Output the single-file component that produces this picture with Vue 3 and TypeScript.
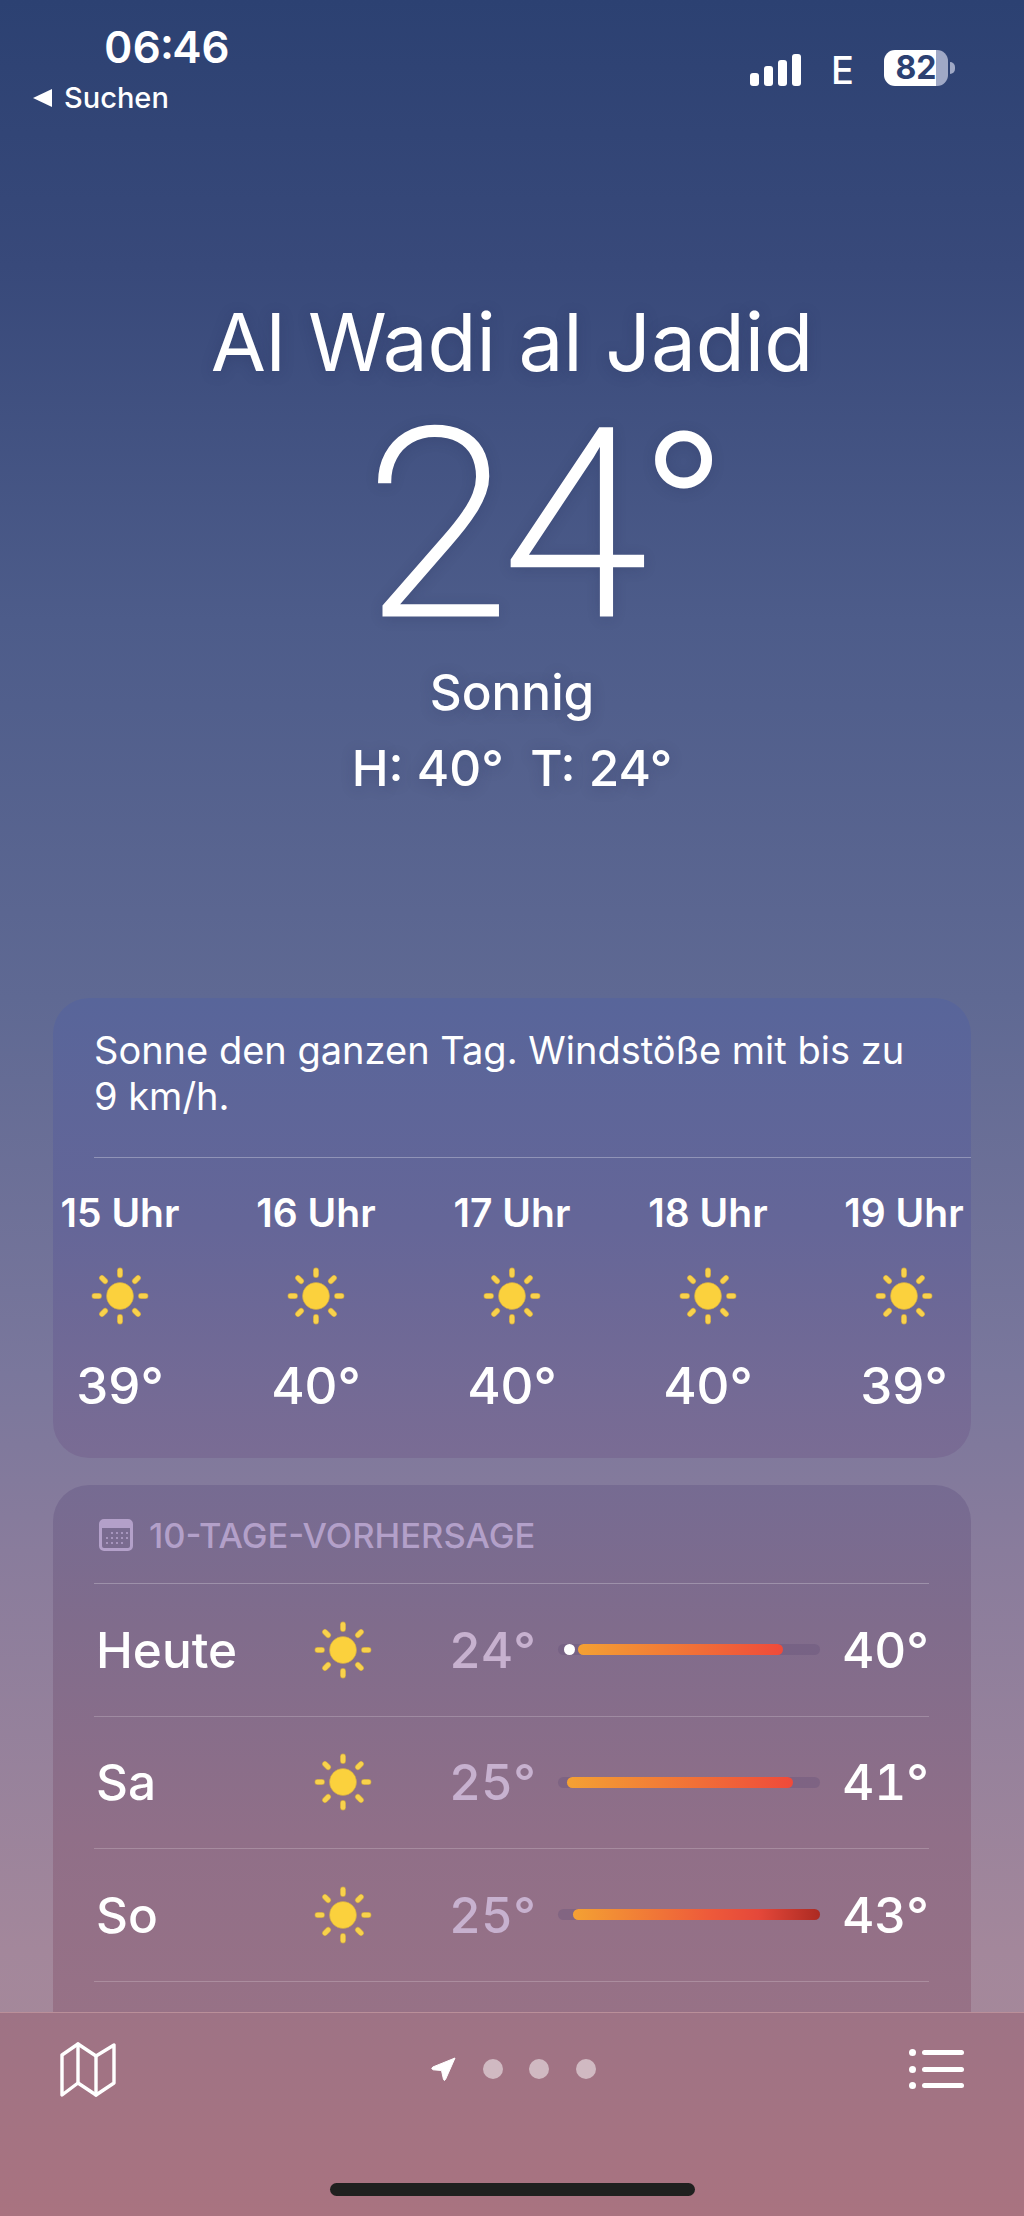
<template>
  <div class="page">
    <header class="status">
      <div class="status-left">
        <div class="time">06:46</div>
        <div class="back"><span class="back-arrow"></span>Suchen</div>
      </div>
      <div class="status-right">
        <div class="signal">
          <span v-for="h in [13, 20, 26, 32]" :key="h" class="signal-bar" :style="{ height: h + 'px' }"></span>
        </div>
        <span class="net">E</span>
        <div class="battery"><span class="battery-num">82</span></div>
        <span class="battery-nub"></span>
      </div>
    </header>

    <main class="scroll">
      <section class="hero">
        <h1 class="city">Al Wadi al Jadid</h1>
        <div class="temp">24<span class="temp-deg">°</span></div>
        <div class="cond">Sonnig</div>
        <div class="hilo">H: 40°&nbsp; T: 24°</div>
      </section>

      <section class="card hourly">
        <p class="summary">Sonne den ganzen Tag. Windstöße mit bis zu 9&nbsp;km/h.</p>
        <div class="hours">
          <div v-for="h in hours" :key="h.label" class="hour">
            <div class="hour-label">{{ h.label }}</div>
            <svg class="sun" viewBox="-30 -30 60 60">
              <circle r="13.5" fill="#fbd13d" stroke="#c9a24a" stroke-width="0.6" />
              <g stroke="#c9a24a" stroke-width="5.8" stroke-linecap="round">
                <line v-for="a in rays" :key="a" y1="-21" y2="-25.5" :transform="`rotate(${a})`" />
              </g>
              <g stroke="#f8d24c" stroke-width="4.6" stroke-linecap="round">
                <line v-for="a in rays" :key="a" y1="-21" y2="-25.5" :transform="`rotate(${a})`" />
              </g>
            </svg>
            <div class="hour-temp">{{ h.temp }}°</div>
          </div>
        </div>
      </section>

      <section class="card forecast">
        <div class="forecast-head">
          <svg class="cal" viewBox="0 0 34 32">
            <path fill="#b3a0c9" fill-rule="evenodd" d="M5 0h24a5 5 0 0 1 5 5v22a5 5 0 0 1-5 5H5a5 5 0 0 1-5-5V5a5 5 0 0 1 5-5zM3 9v18a2 2 0 0 0 2 2h24a2 2 0 0 0 2-2V9z" />
            <g fill="#b3a0c9">
              <circle v-for="d in calDots" :key="d[0] + '-' + d[1]" :cx="d[0]" :cy="d[1]" r="1.1" />
            </g>
          </svg>
          <span>10-TAGE-VORHERSAGE</span>
        </div>
        <div v-for="d in days" :key="d.name" class="day">
          <span class="day-name">{{ d.name }}</span>
          <svg class="sun day-sun" viewBox="-30 -30 60 60">
            <circle r="13.5" fill="#fbd13d" stroke="#c9a24a" stroke-width="0.6" />
            <g stroke="#c9a24a" stroke-width="5.8" stroke-linecap="round">
              <line v-for="a in rays" :key="a" y1="-21" y2="-25.5" :transform="`rotate(${a})`" />
            </g>
            <g stroke="#f8d24c" stroke-width="4.6" stroke-linecap="round">
              <line v-for="a in rays" :key="a" y1="-21" y2="-25.5" :transform="`rotate(${a})`" />
            </g>
          </svg>
          <span class="day-low">{{ d.low }}°</span>
          <div class="range">
            <div class="range-fill" :style="{ marginLeft: d.from + 'px', width: d.width + 'px', background: d.fill }"></div>
            <span v-if="d.now" class="range-now"></span>
          </div>
          <span class="day-high">{{ d.high }}°</span>
        </div>
      </section>
    </main>

    <footer class="tabbar">
      <svg class="map" viewBox="0 0 56 55" fill="none" stroke="#fff" stroke-width="3.4" stroke-linejoin="round" stroke-linecap="round">
        <path d="M2 13 L18 2 L36 14 L54 3 V41 L36 53 L18 41 L2 53 Z" />
        <path d="M18 2 V41 M36 14 V53" />
      </svg>
      <div class="pager">
        <svg class="arrow" viewBox="0 0 25 24"><path fill="#fff" stroke="#fff" stroke-width="1" stroke-linejoin="round" d="M24 1 L14.500 22.500 Q13.200 24.400 12.500 22.500 L10.500 13.500 L2 12.800 Q-0.300 11.500 1.800 10 Z" /></svg>
        <span class="dot"></span><span class="dot"></span><span class="dot"></span>
      </div>
      <div class="list">
        <div v-for="n in 3" :key="n" class="list-row"><span class="list-dot"></span><span class="list-line"></span></div>
      </div>
      <span class="home"></span>
    </footer>
  </div>
</template>

<script setup lang="ts">
const rays = [0, 45, 90, 135, 180, 225, 270, 315]

const hours = [
  { label: '15 Uhr', temp: 39 },
  { label: '16 Uhr', temp: 40 },
  { label: '17 Uhr', temp: 40 },
  { label: '18 Uhr', temp: 40 },
  { label: '19 Uhr', temp: 39 }
]

const warm = 'linear-gradient(90deg, #f4a133, #ef4a3a)'
const hot = 'linear-gradient(90deg, #f4a133 0%, #ee5a3a 55%, #e5483a 75%, #ac2a22 100%)'

const days = [
  { name: 'Heute', low: 24, high: 40, from: 20, width: 205, fill: warm, now: true },
  { name: 'Sa', low: 25, high: 41, from: 9, width: 226, fill: warm, now: false },
  { name: 'So', low: 25, high: 43, from: 15, width: 247, fill: hot, now: false }
]

const calDots: number[][] = []
for (const y of [14, 19, 24]) {
  for (const x of [8, 13, 18, 23, 28]) {
    if (!(y === 14 && x === 8) && !(y === 24 && x === 28)) calDots.push([x, y])
  }
}
</script>

<style>
html,
body {
  margin: 0;
  padding: 0;
}
</style>

<style scoped>
.page {
  position: relative;
  width: 1024px;
  height: 2216px;
  overflow: hidden;
  display: flex;
  flex-direction: column;
  font-family: Inter, "Noto Sans", sans-serif;
  color: #fff;
  background: linear-gradient(180deg, #2c4172 0%, #38497a 12%, #4d5c8a 28%, #5f6993 45%, #7a779c 62%, #897c9c 70%, #a3879b 88%, #a98a98 100%);
}

.status {
  height: 120px;
  flex: none;
  display: flex;
  justify-content: space-between;
  box-sizing: border-box;
  padding: 26px 69px 0 33px;
}

.time {
  margin-left: 71px;
  font-size: 44px;
  font-weight: 600;
  line-height: 42px;
  font-variant-numeric: tabular-nums;
}

.back {
  display: flex;
  align-items: center;
  margin-top: 13px;
  font-size: 29px;
  font-weight: 500;
  line-height: 34px;
}

.back-arrow {
  width: 0;
  height: 0;
  margin-right: 12px;
  border-style: solid;
  border-width: 9px 19px 9px 0;
  border-color: transparent #fff transparent transparent;
}

.status-right {
  display: flex;
  align-items: flex-start;
  padding-top: 24px;
}

.signal {
  display: flex;
  align-items: flex-end;
  gap: 5px;
  height: 32px;
  margin-top: 4px;
}

.signal-bar {
  width: 9px;
  border-radius: 3px;
  background: #fff;
}

.net {
  margin: 1px 30px 0 30px;
  font-size: 38px;
  font-weight: 500;
  line-height: 38px;
}

.battery {
  position: relative;
  width: 64px;
  height: 36px;
  border-radius: 11px;
  background: linear-gradient(90deg, #fff 82%, #a0a9c6 82%);
  display: flex;
  align-items: center;
  justify-content: center;
}

.battery-num {
  color: #2c4172;
  font-size: 32px;
  font-weight: 700;
  line-height: 36px;
}

.battery-nub {
  width: 5px;
  height: 12px;
  margin: 12px 0 0 2px;
  border-radius: 0 6px 6px 0;
  background: #a0a9c6;
}

.scroll {
  flex: 1;
  min-height: 0;
  overflow: hidden;
  display: flex;
  flex-direction: column;
}

.hero {
  flex: none;
  height: 878px;
  display: flex;
  flex-direction: column;
  align-items: center;
  text-shadow: 0 2px 14px rgba(30, 40, 80, 0.25);
}

.city {
  margin: 174px 0 0;
  font-size: 80px;
  font-weight: 400;
  line-height: 96px;
}

.temp {
  margin: 21px 0 0 69px;
  font-family: Roboto, Inter, sans-serif;
  font-size: 262px;
  font-weight: 200;
  line-height: 230px;
  letter-spacing: -7px;
  -webkit-text-stroke: 3px #fff;
}

.temp-deg {
  font-size: 232px;
  line-height: 0;
  letter-spacing: 0;
  vertical-align: 16px;
}

.cond {
  margin-top: 21px;
  font-size: 49.500px;
  font-weight: 500;
  line-height: 60px;
}

.hilo {
  margin-top: 16px;
  font-size: 49.500px;
  font-weight: 500;
  line-height: 60px;
}

.card {
  flex: none;
  box-sizing: border-box;
  width: 918px;
  margin-left: 53px;
  border-radius: 36px;
}

.hourly {
  height: 460px;
  background: linear-gradient(180deg, #58659a 0%, #656698 50%, #7a6c94 100%);
}

.summary {
  height: 160px;
  box-sizing: border-box;
  margin: 0 0 0 41px;
  padding-top: 29px;
  border-bottom: 1px solid rgba(255, 255, 255, 0.3);
  font-size: 38px;
  line-height: 46px;
  width: 877px;
  padding-right: 40px;
}

.hours {
  display: flex;
  justify-content: space-between;
  padding: 0 6px;
}

.hour {
  width: 122px;
  display: flex;
  flex-direction: column;
  align-items: center;
}

.hour-label {
  margin-top: 33px;
  font-size: 39px;
  font-weight: 600;
  line-height: 44px;
  white-space: nowrap;
}

.sun {
  width: 60px;
  height: 60px;
  display: block;
}

.hourly .sun {
  margin-top: 31px;
}

.hour-temp {
  margin-top: 30px;
  font-size: 51px;
  font-weight: 500;
  line-height: 60px;
}

.forecast {
  height: 640px;
  margin-top: 27px;
  padding: 0 42px 0 41px;
  background: linear-gradient(180deg, #766b92 0%, #806c8c 22%, #906f88 55%, #9c7385 100%);
}

.forecast-head {
  height: 99px;
  box-sizing: border-box;
  padding: 34px 0 0 5px;
  display: flex;
  align-items: flex-start;
  gap: 16px;
  font-size: 34.500px;
  font-weight: 500;
  line-height: 34px;
  color: #b3a0c9;
  border-bottom: 1px solid rgba(255, 255, 255, 0.25);
}

.cal {
  width: 34px;
  height: 32px;
  flex: none;
}

.day {
  height: 132.500px;
  box-sizing: border-box;
  display: flex;
  align-items: center;
  border-bottom: 1px solid rgba(255, 255, 255, 0.2);
}

.day-name {
  width: 219px;
  padding-left: 2px;
  box-sizing: border-box;
  font-size: 49.500px;
  font-weight: 500;
}

.day-low {
  width: 88px;
  margin-left: 76px;
  font-size: 49.500px;
  font-weight: 500;
  font-variant-numeric: tabular-nums;
  color: #c7b1cf;
}

.range {
  position: relative;
  width: 262px;
  height: 11px;
  margin-left: 21px;
  border-radius: 6px;
  background: rgba(100, 80, 120, 0.35);
  display: flex;
}

.range-fill {
  height: 11px;
  border-radius: 6px;
}

.range-now {
  position: absolute;
  left: 6px;
  top: 0;
  width: 11px;
  height: 11px;
  border-radius: 50%;
  background: #fff;
}

.day-high {
  margin-left: auto;
  font-size: 49.500px;
  font-weight: 500;
  font-variant-numeric: tabular-nums;
}

.tabbar {
  position: relative;
  flex: none;
  height: 204px;
  box-sizing: border-box;
  border-top: 1px solid rgba(255, 255, 255, 0.2);
  padding: 29px 60px 0;
  display: flex;
  justify-content: space-between;
  align-items: flex-start;
  background: linear-gradient(180deg, #9e7385 0%, #a97380 100%);
}

.map {
  width: 56px;
  height: 55px;
}

.pager {
  display: flex;
  align-items: center;
  gap: 26.500px;
  margin: 15px 0 0 2px;
}

.arrow {
  width: 25px;
  height: 24px;
}

.dot {
  width: 20px;
  height: 20px;
  border-radius: 50%;
  background: rgba(255, 255, 255, 0.5);
}

.list {
  width: 55px;
  display: flex;
  flex-direction: column;
  gap: 11.500px;
  margin-top: 8px;
}

.list-row {
  display: flex;
  align-items: center;
  gap: 6px;
  height: 5px;
}

.list-dot {
  width: 7px;
  height: 7px;
  border-radius: 50%;
  background: #fff;
  flex: none;
}

.list-line {
  flex: 1;
  height: 5px;
  border-radius: 3px;
  background: #fff;
}

.home {
  position: absolute;
  left: 330px;
  top: 170px;
  width: 365px;
  height: 13px;
  border-radius: 7px;
  background: #1f201f;
}
</style>
